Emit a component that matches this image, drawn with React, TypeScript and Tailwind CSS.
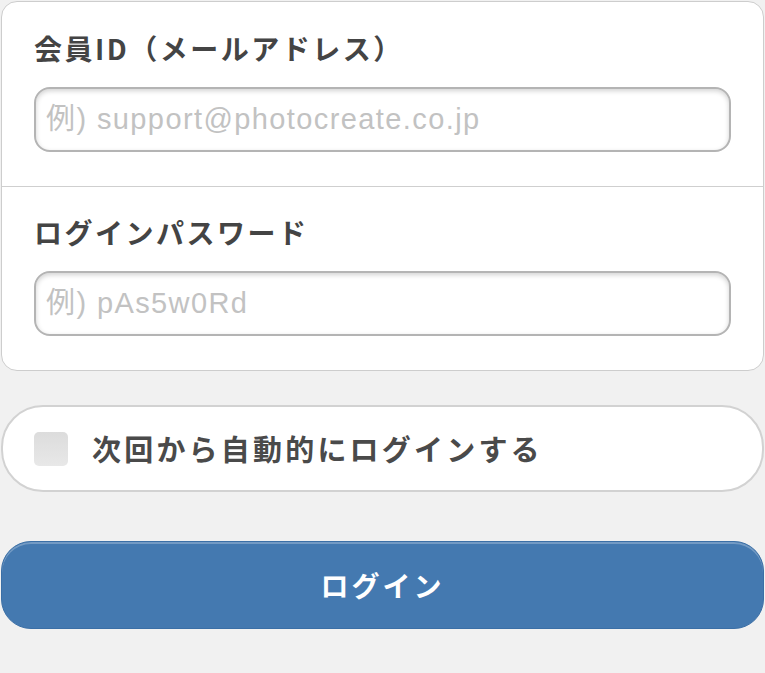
import { useState } from "react";

const jp = { fontFamily: '"Noto Sans CJK JP", "Noto Sans", sans-serif' };
const latin = { fontFamily: '"Liberation Sans", "Noto Sans CJK JP", sans-serif' };

function Field({ label, placeholder, type, top }: { label: string; placeholder: string; type: string; top: string }) {
    return (
        <div className={`px-[32px] pb-[34px] ${top}`}>
            <div className="text-[28px] font-bold leading-[38px] tracking-[2.5px] text-[#444]" style={jp}>
                {label}
            </div>
            <input
                type={type}
                placeholder={placeholder}
                className="mt-[20px] block h-[65px] w-full rounded-[16px] border-2 border-[#b4b4b4] bg-white px-[10px] text-[29px] tracking-[1.4px] text-[#444] placeholder:text-[#c2c2c2] shadow-[inset_0_2px_5px_rgba(0,0,0,0.18)] outline-none"
                style={latin}
            />
        </div>
    );
}

export default function App() {
    const [auto, setAuto] = useState(false);

    return (
        <div className="min-h-[673px] bg-[#f1f1f1] px-[1px] pt-[1px]">
            {/* 入力欄 */}
            <div className="rounded-[16px] border border-[#cdcdcd] bg-white">
                <Field label="会員ID（メールアドレス）" placeholder="例) support@photocreate.co.jp" type="email" top="pt-[27px]" />
                <div className="border-t border-[#cfcfcf]" />
                <Field label="ログインパスワード" placeholder="例) pAs5w0Rd" type="password" top="pt-[26px]" />
            </div>

            {/* 自動ログイン */}
            <label className="mt-[34px] flex h-[87px] cursor-pointer items-center gap-[24px] rounded-[42px] border-2 border-[#d2d2d2] bg-white px-[31px]">
                <span
                    onClick={() => setAuto(!auto)}
                    className={`h-[34px] w-[34px] shrink-0 rounded-[5px] bg-gradient-to-b from-[#dcdcdc] to-[#e8e8e8] ${auto ? "ring-2 ring-[#4479b0]" : ""}`}
                />
                <span className="text-[29px] font-bold tracking-[3.2px] text-[#4a4a4a]" style={jp}>
                    次回から自動的にログインする
                </span>
            </label>

            {/* ボタン */}
            <button
                className="mt-[49px] flex h-[88px] w-full items-center justify-center rounded-[30px] border border-[#3b6fa6] bg-[#4479b0] shadow-[inset_0_2px_0_rgba(255,255,255,0.25)] text-[28px] font-bold tracking-[3px] text-white"
                style={jp}
            >
                ログイン
            </button>
        </div>
    );
}
